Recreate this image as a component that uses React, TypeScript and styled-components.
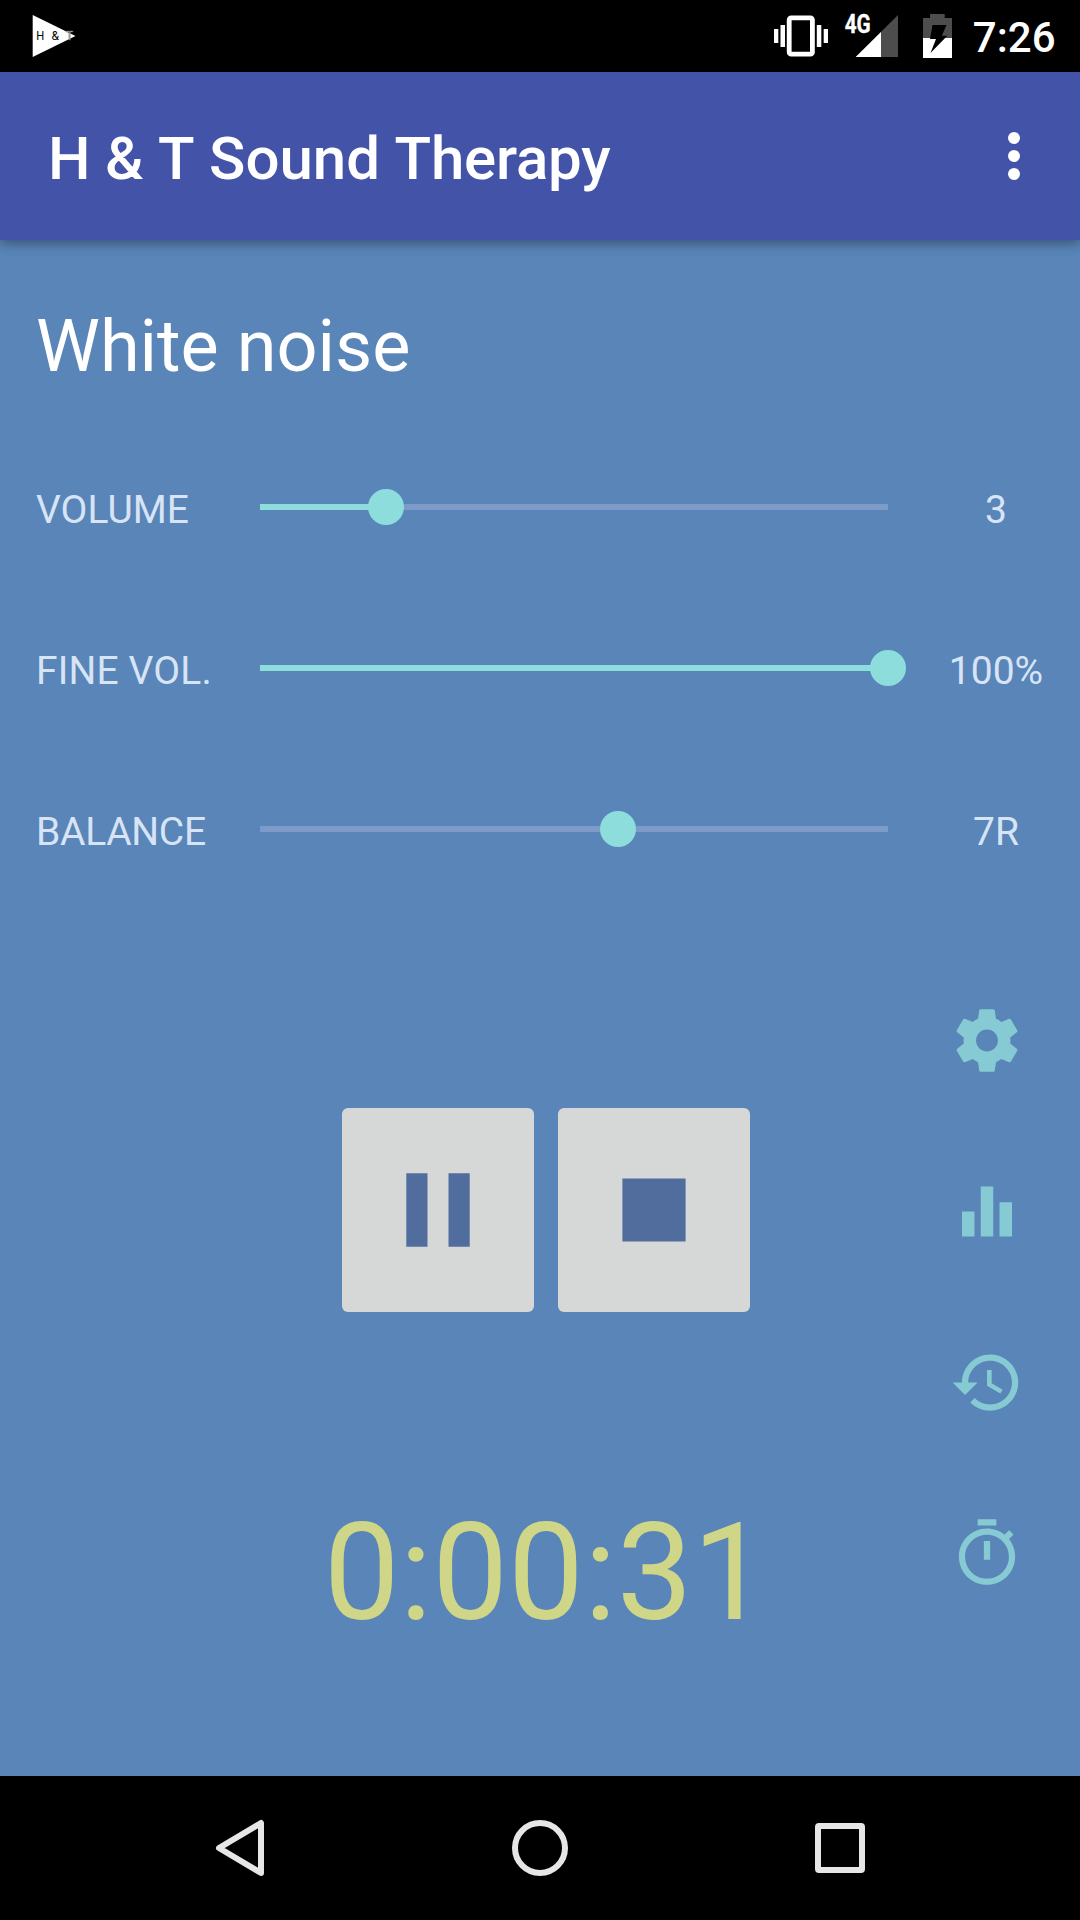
import React from "react";
import styled, { createGlobalStyle } from "styled-components";

const GlobalStyle = createGlobalStyle`
  * { box-sizing: border-box; }
  body { margin: 0; background: #000; }
`;

const Screen = styled.div`
  display: flex;
  flex-direction: column;
  width: 1080px;
  height: 1920px;
  background: #5985b8;
  color: #fff;
  font-family: Roboto, "Noto Sans", sans-serif;
  overflow: hidden;
`;

const StatusBar = styled.header`
  display: flex;
  align-items: center;
  justify-content: space-between;
  height: 72px;
  padding: 0 24.5px 0 32px;
  background: #000;
`;

const StatusIcons = styled.div`
  display: flex;
  align-items: center;
`;

const Clock = styled.time`
  margin-left: 19.5px;
  font-size: 42px;
  line-height: 72px;
  font-weight: 500;
  padding-top: 3px;
`;

const AppBar = styled.div`
  display: flex;
  align-items: center;
  justify-content: space-between;
  height: 168px;
  padding: 0 48px;
  background: #4353a7;
  box-shadow: 0 3px 12px rgba(0, 0, 0, 0.4);
  z-index: 1;
`;

const AppTitle = styled.h1`
  display: flex;
  gap: 14.5px;
  margin: 0;
  padding-top: 6px;
  font-size: 60px;
  line-height: 70px;
  font-weight: 500;
`;

const TitleWord = styled.span<{ $tracking?: number }>`
  letter-spacing: ${(p) => p.$tracking ?? 0}px;
`;

const Overflow = styled.button`
  display: flex;
  flex-direction: column;
  align-items: center;
  gap: 6px;
  width: 36px;
  padding: 0;
  border: 0;
  background: none;
`;

const Dot = styled.span`
  width: 12px;
  height: 12px;
  border-radius: 50%;
  background: #fff;
`;

const Content = styled.main`
  display: flex;
  flex-direction: column;
  flex: 1;
  padding: 65px 36px 0;
`;

const SoundName = styled.h2`
  margin: 0;
  font-size: 72px;
  line-height: 84px;
  font-weight: 400;
`;

const Sliders = styled.section`
  display: flex;
  flex-direction: column;
  margin-top: 37px;
`;

const SliderRow = styled.div`
  display: grid;
  grid-template-columns: 224px 628px 36px 144px;
  align-items: center;
  height: 161px;
`;

const Label = styled.span<{ $center?: boolean; $tracking?: number }>`
  padding-top: 7px;
  font-size: 39px;
  line-height: 46px;
  letter-spacing: ${(p) => p.$tracking ?? 0}px;
  color: #d7e4f5;
  text-align: ${(p) => (p.$center ? "center" : "left")};
  grid-column: ${(p) => (p.$center ? 4 : 1)};
`;

const Track = styled.div`
  display: flex;
  align-items: center;
  height: 36px;
`;

const Filled = styled.div<{ $plain?: boolean }>`
  height: 6px;
  background: ${(p) => (p.$plain ? "#7c9bc8" : "#8edddd")};
`;

const Thumb = styled.div`
  flex: none;
  width: 36px;
  height: 36px;
  margin: 0 -18px;
  border-radius: 50%;
  background: #8edddd;
  z-index: 1;
`;

const Rest = styled.div`
  flex: 1;
  height: 6px;
  background: #7c9bc8;
`;

const Lower = styled.section`
  display: grid;
  grid-template-columns: 306px 408px 1fr;
  margin-top: 94px;
`;

const Player = styled.div`
  grid-column: 2;
  display: flex;
  flex-direction: column;
  align-items: center;
  padding-top: 105px;
`;

const Buttons = styled.div`
  display: flex;
  gap: 24px;
`;

const MediaButton = styled.button`
  display: flex;
  align-items: center;
  justify-content: center;
  width: 192px;
  height: 204px;
  padding: 0;
  border: 0;
  border-radius: 6px;
  background: #d6d8d7;
`;

const Elapsed = styled.div`
  margin-top: 182px;
  font-size: 135px;
  line-height: 158px;
  color: #d0d688;
  white-space: nowrap;
`;

const Tools = styled.nav`
  display: flex;
  flex-direction: column;
  align-items: flex-end;
  gap: 96px;
  padding-right: 20px;
`;

const ToolButton = styled.button`
  display: flex;
  width: 75px;
  height: 75px;
  padding: 0;
  border: 0;
  background: none;
`;

const NavBar = styled.footer`
  display: flex;
  align-items: center;
  justify-content: space-between;
  height: 144px;
  padding: 0 204px;
  background: #000;
`;

const tools = [
  {
    name: "Settings",
    path: "M19.43 12.98c.04-.32.07-.64.07-.98s-.03-.66-.07-.98l2.11-1.65c.19-.15.24-.42.12-.64l-2-3.46c-.12-.22-.39-.3-.61-.22l-2.49 1c-.52-.4-1.08-.73-1.69-.98l-.38-2.65C14.46 2.18 14.25 2 14 2h-4c-.25 0-.46.18-.49.42l-.38 2.65c-.61.25-1.17.59-1.69.98l-2.49-1c-.23-.09-.49 0-.61.22l-2 3.46c-.13.22-.07.49.12.64l2.11 1.65c-.04.32-.07.65-.07.98s.03.66.07.98l-2.11 1.65c-.19.15-.24.42-.12.64l2 3.46c.12.22.39.3.61.22l2.49-1c.52.4 1.08.73 1.69.98l.38 2.65c.03.24.24.42.49.42h4c.25 0 .46-.18.49-.42l.38-2.65c.61-.25 1.17-.59 1.69-.98l2.49 1c.23.09.49 0 .61-.22l2-3.46c.12-.22.07-.49-.12-.64l-2.11-1.65zM12 15.5c-1.93 0-3.5-1.57-3.5-3.5s1.57-3.5 3.5-3.5 3.5 1.57 3.5 3.5-1.57 3.5-3.5 3.5z",
  },
  { name: "Equalizer", path: "M10 20h4V4h-4v16zm-6 0h4v-8H4v8zM16 9v11h4V9h-4z" },
  {
    name: "History",
    path: "M13 3c-4.97 0-9 4.03-9 9H1l3.89 3.89.07.14L9 12H6c0-3.87 3.13-7 7-7s7 3.13 7 7-3.13 7-7 7c-1.93 0-3.68-.79-4.94-2.06l-1.42 1.42C8.27 19.99 10.51 21 13 21c4.97 0 9-4.03 9-9s-4.03-9-9-9zm-1 5v5l4.28 2.54.72-1.21-3.5-2.08V8H12z",
  },
  {
    name: "Timer",
    path: "M15 1H9v2h6V1zm-4 13h2V8h-2v6zm8.03-6.61l1.42-1.42c-.43-.51-.9-.99-1.41-1.41l-1.42 1.42C16.07 4.74 14.12 4 12 4c-4.97 0-9 4.03-9 9s4.02 9 9 9 9-4.03 9-9c0-2.12-.74-4.07-1.97-5.61zM12 20c-3.87 0-7-3.13-7-7s3.13-7 7-7 7 3.13 7 7-3.13 7-7 7z",
  },
];

const sliders = [
  { label: "VOLUME", percent: 20, value: "3", tracking: 0 },
  { label: "FINE VOL.", percent: 100, value: "100%", tracking: 0.15 },
  { label: "BALANCE", percent: 57, value: "7R", tracking: -0.3, plain: true },
];

export default function App() {
  return (
    <Screen>
      <GlobalStyle />
      <StatusBar>
        <svg width="48" height="72" viewBox="32 0 48 72">
          <path d="M32.7 15L75.5 36L32.7 57Z" fill="#fff" />
          <g fontFamily="Roboto" fontSize="13" fill="#000">
            <text x="36.3" y="40" textLength="8" lengthAdjust="spacingAndGlyphs">H</text>
            <text x="51.5" y="40" textLength="7.5" lengthAdjust="spacingAndGlyphs">&amp;</text>
            <text x="66" y="40" textLength="7" lengthAdjust="spacingAndGlyphs" fill="#fff" stroke="#666" strokeWidth="0.7">T</text>
          </g>
        </svg>
        <StatusIcons>
          <svg width="182" height="72" viewBox="771 0 182 72">
            <rect x="789.2" y="17.8" width="23.2" height="36.4" rx="2" fill="none" stroke="#fff" strokeWidth="4.8" />
            <path d="M774 29h4.3v14H774zM780.5 25h4.5v22h-4.5zM816.8 25h4.5v22h-4.5zM823.7 29h4.3v14h-4.3z" fill="#fff" />
            <text x="844.7" y="33.3" fontFamily="Roboto" fontWeight="700" fontSize="25.5" fill="#fff" stroke="#fff" strokeWidth="0.4" textLength="26" lengthAdjust="spacingAndGlyphs">4G</text>
            <path d="M855.7 57L898 15V57Z" fill="#4d4d4d" />
            <path d="M855.7 57L881 31.9V57Z" fill="#fff" />
            <path d="M930 14h14.7v4H952v20H923V18h7z" fill="#4d4d4d" />
            <path d="M923 38h29v20H923z" fill="#fff" />
            <path d="M932.5 25H946.5L941.8 35.8H947.3L930.5 53L936 39H930Z" fill="#000" />
          </svg>
          <Clock>7:26</Clock>
        </StatusIcons>
      </StatusBar>
      <AppBar>
        <AppTitle>
          <TitleWord>H</TitleWord>
          <TitleWord>&amp;</TitleWord>
          <TitleWord>T</TitleWord>
          <TitleWord>Sound</TitleWord>
          <TitleWord $tracking={-0.2}>Therapy</TitleWord>
        </AppTitle>
        <Overflow aria-label="More options">
          <Dot />
          <Dot />
          <Dot />
        </Overflow>
      </AppBar>
      <Content>
        <SoundName>White noise</SoundName>
        <Sliders>
          {sliders.map((s) => (
            <SliderRow key={s.label}>
              <Label $tracking={s.tracking}>{s.label}</Label>
              <Track>
                <Filled $plain={s.plain} style={{ width: `${s.percent}%` }} />
                <Thumb />
                <Rest />
              </Track>
              <Label $center>{s.value}</Label>
            </SliderRow>
          ))}
        </Sliders>
        <Lower>
          <Player>
            <Buttons>
              <MediaButton aria-label="Pause">
                <svg width="64" height="74" viewBox="0 0 64 74">
                  <path d="M0.3 0.2h21.2v73.6H0.3zM42.5 0.2h21.2v73.6H42.5z" fill="#506d9d" />
                </svg>
              </MediaButton>
              <MediaButton aria-label="Stop">
                <svg width="64" height="64" viewBox="0 0 64 64">
                  <path d="M0.4 0.4h63.2v63.2H0.4z" fill="#506d9d" />
                </svg>
              </MediaButton>
            </Buttons>
            <Elapsed>0:00:31</Elapsed>
          </Player>
          <Tools>
            {tools.map((t) => (
              <ToolButton key={t.name} aria-label={t.name}>
                <svg width="75" height="75" viewBox="-0.16 0 24 24">
                  <path d={t.path} fill="#86cad4" />
                </svg>
              </ToolButton>
            ))}
          </Tools>
        </Lower>
      </Content>
      <NavBar>
        <svg width="72" height="72" viewBox="204 1812 72 72">
          <path d="M261 1823V1873L219 1848Z" fill="none" stroke="#e6e6e6" strokeWidth="6" strokeLinejoin="round" />
        </svg>
        <svg width="72" height="72" viewBox="504 1812 72 72">
          <circle cx="540" cy="1848" r="25" fill="none" stroke="#e6e6e6" strokeWidth="6" />
        </svg>
        <svg width="72" height="72" viewBox="804 1812 72 72">
          <rect x="818" y="1826" width="44" height="44" rx="1" fill="none" stroke="#e6e6e6" strokeWidth="6" strokeLinejoin="round" />
        </svg>
      </NavBar>
    </Screen>
  );
}
